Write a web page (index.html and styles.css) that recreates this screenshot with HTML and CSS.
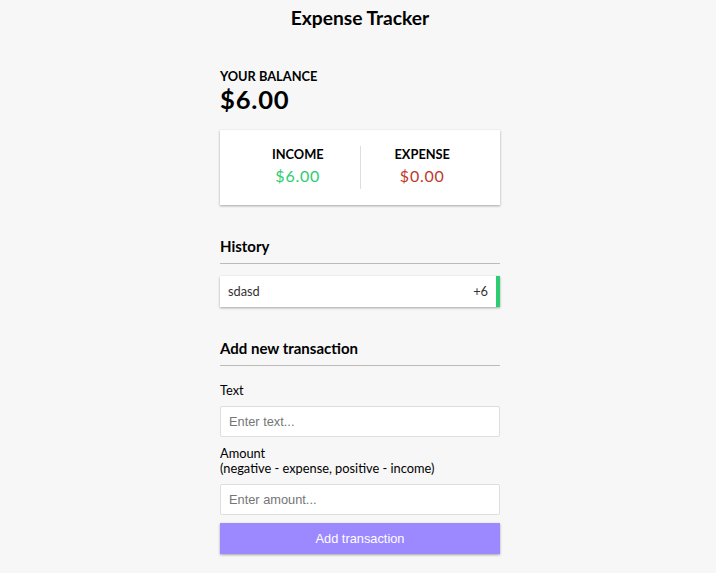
FILE: index.html
```html
<!DOCTYPE html>
<html lang="en">
<head>
<meta charset="UTF-8">
<title>Expense Tracker</title>
<link rel="stylesheet" href="styles.css">
</head>
<body>
  <h2 class="title">Expense Tracker</h2>
  <div class="container">
    <h4 class="label-caps">Your Balance</h4>
    <h1 class="balance">$6.00</h1>

    <div class="inc-exp-container">
      <div class="inc-exp-col first">
        <h4 class="label-caps">Income</h4>
        <p class="money plus">$6.00</p>
      </div>
      <div class="inc-exp-col">
        <h4 class="label-caps">Expense</h4>
        <p class="money minus">$0.00</p>
      </div>
    </div>

    <h3 class="section-title">History</h3>
    <ul class="list">
      <li class="list-item plus">sdasd <span>+6</span></li>
    </ul>

    <h3 class="section-title">Add new transaction</h3>
    <form class="form">
      <div class="form-control">
        <label class="field-label" for="text">Text</label>
        <input class="field-input" type="text" id="text" placeholder="Enter text...">
      </div>
      <div class="form-control">
        <label class="field-label" for="amount">Amount <br>(negative - expense, positive - income)</label>
        <input class="field-input" type="number" id="amount" placeholder="Enter amount...">
      </div>
      <button class="btn" type="button">Add transaction</button>
    </form>
  </div>
</body>
</html>
```
FILE: styles.css
```css
* {
  box-sizing: border-box;
}

body {
  background-color: #f7f7f7;
  display: flex;
  flex-direction: column;
  align-items: center;
  margin: 0;
  padding-left: 4px;
  font-family: "Lato", "Noto Sans", sans-serif;
  font-size: 12.8px;
  color: #000;
}

.title {
  font-size: 19.2px;
  font-weight: 700;
  margin: 6px 0 16px;
}

.container {
  margin: 23px auto;
  width: 280px;
}

.label-caps {
  margin: 0;
  font-size: 12.8px;
  font-weight: 700;
  text-transform: uppercase;
}

.balance {
  font-size: 25.6px;
  letter-spacing: 0.8px;
  margin: 0;
  font-weight: 700;
}

.inc-exp-container {
  background-color: #fff;
  box-shadow: 0 1px 3px rgba(0, 0, 0, 0.12), 0 1px 2px rgba(0, 0, 0, 0.24);
  padding: 16px;
  display: flex;
  justify-content: space-between;
  margin: 16px 0;
}

.inc-exp-col {
  flex: 1;
  text-align: center;
}

.inc-exp-col.first {
  border-right: 1px solid #dedede;
}

.money {
  font-size: 16px;
  letter-spacing: 0.8px;
  margin: 4px 0;
}

.money.plus {
  color: #2ecc71;
}

.money.minus {
  color: #c0392b;
}

.section-title {
  font-size: 15px;
  font-weight: 700;
  border-bottom: 1px solid #bbb;
  padding-bottom: 8px;
  margin: 32px 0 8px;
}

.list {
  list-style-type: none;
  padding: 0;
  margin: 12px 0 32px;
}

.list-item {
  background-color: #fff;
  box-shadow: 0 1px 3px rgba(0, 0, 0, 0.12), 0 1px 2px rgba(0, 0, 0, 0.24);
  color: #333;
  display: flex;
  justify-content: space-between;
  line-height: 15px;
  padding: 8px;
  margin: 8px 0;
}

.list-item.plus {
  border-right: 4px solid #2ecc71;
}

.form {
  margin: 0;
}

.form-control {
  display: flex;
  flex-direction: column;
}

.field-label {
  display: block;
  line-height: 15px;
  margin: 9px 0 8px;
}

.field-input {
  border: 1px solid #dedede;
  border-radius: 2px;
  display: block;
  font-family: "Liberation Sans", Arial, sans-serif;
  font-size: 12.8px;
  height: 31px;
  padding: 0 8px;
  width: 100%;
  background: #fff;
  margin: 0;
}

.field-input::placeholder {
  color: #757575;
}

.btn {
  cursor: pointer;
  background-color: #9c88ff;
  box-shadow: 0 1px 3px rgba(0, 0, 0, 0.12), 0 1px 2px rgba(0, 0, 0, 0.24);
  color: #fff;
  border: 0;
  display: block;
  font-family: "Liberation Sans", Arial, sans-serif;
  font-size: 12.8px;
  height: 31px;
  margin: 8px 0 24px;
  padding: 0 8px;
  width: 100%;
}
```
